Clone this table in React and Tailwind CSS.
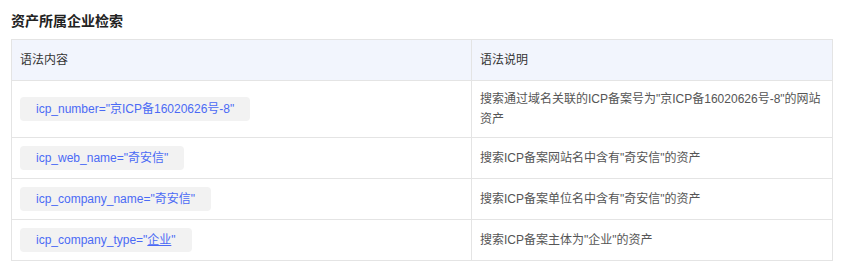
import React from "react";

const rows = [
  {
    code: <>icp_number="京ICP备16020626号-8"</>,
    desc: '搜索通过域名关联的ICP备案号为"京ICP备16020626号-8"的网站资产',
  },
  { code: <>icp_web_name="奇安信"</>, desc: '搜索ICP备案网站名中含有"奇安信"的资产' },
  { code: <>icp_company_name="奇安信"</>, desc: '搜索ICP备案单位名中含有"奇安信"的资产' },
  {
    code: (
      <>
        icp_company_type="<span className="underline">企业</span>"
      </>
    ),
    desc: '搜索ICP备案主体为"企业"的资产',
  },
];

export default function App() {
  return (
    <div
      className="w-[843px] h-[270px] bg-white pl-[11px] pr-[11px] pt-[11px]"
      style={{ fontFamily: '"Liberation Sans", "Noto Sans CJK SC", sans-serif' }}
    >
      <h3 className="text-[14px] leading-[20px] font-bold text-[#222] mb-[8px]">资产所属企业检索</h3>
      <table className="w-[821px] border-collapse border border-[#e4e4e4] text-[12px] table-fixed">
        <colgroup>
          <col className="w-[460px]" />
          <col className="w-[361px]" />
        </colgroup>
        <thead>
          <tr className="bg-[#f2f5fd] h-[41px]">
            <th className="border border-[#e4e4e4] px-[8px] text-left font-normal text-[#333] leading-[20px]">语法内容</th>
            <th className="border border-[#e4e4e4] px-[8px] text-left font-normal text-[#333] leading-[20px]">语法说明</th>
          </tr>
        </thead>
        <tbody>
          {rows.map((r, i) => (
            <tr key={i} className="h-[41px]">
              <td className="border border-[#e4e4e4] px-[8px] py-[8px]">
                <span className="inline-block bg-[#f2f2f2] rounded-[4px] px-[16px] h-[24px] leading-[24px] text-[#4b6af5]">
                  {r.code}
                </span>
              </td>
              <td className="border border-[#e4e4e4] px-[8px] py-[8px] text-[#555] leading-[20px]">{r.desc}</td>
            </tr>
          ))}
        </tbody>
      </table>
    </div>
  );
}
